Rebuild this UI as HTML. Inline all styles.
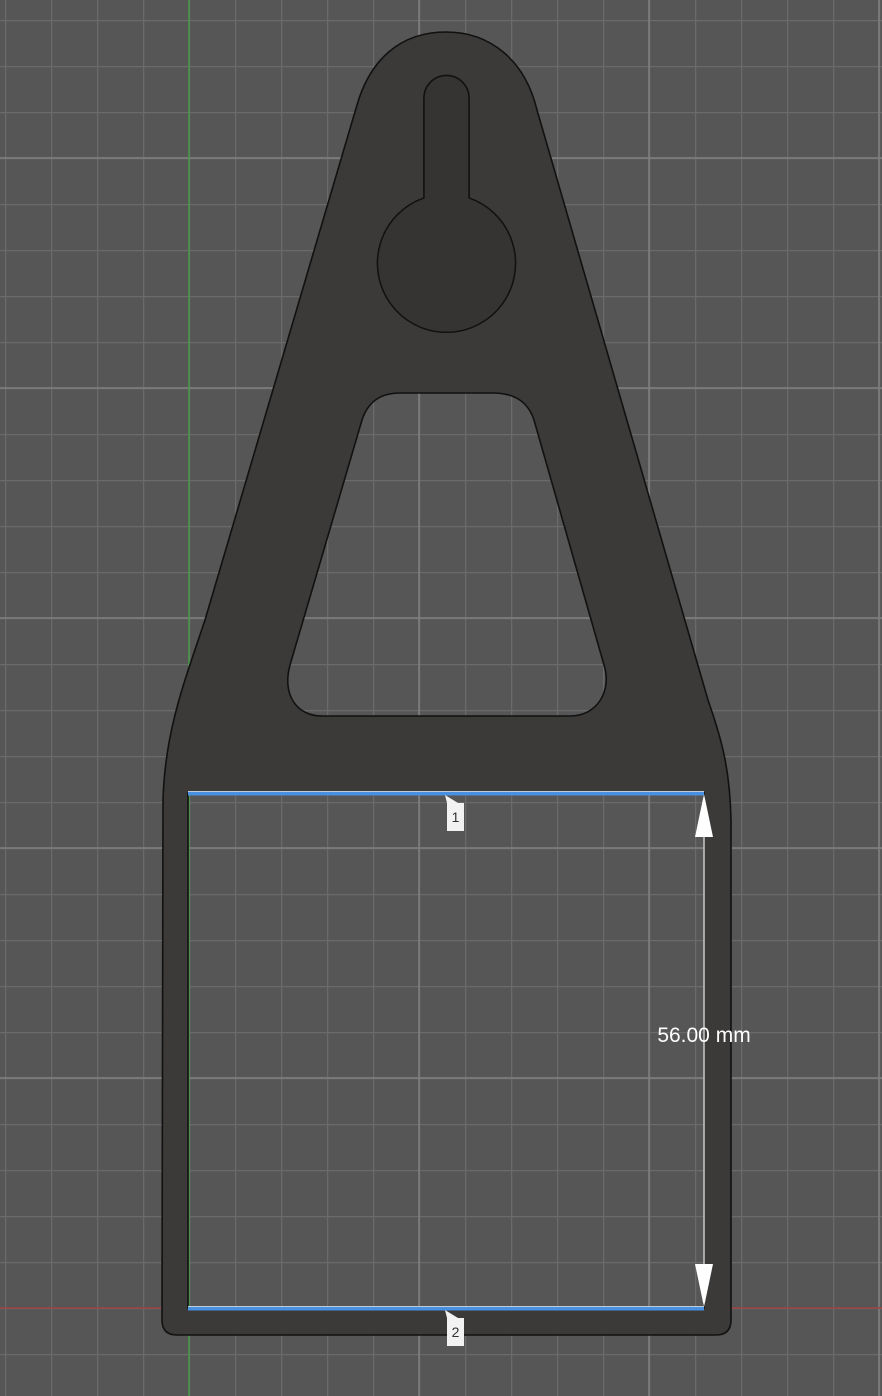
<!DOCTYPE html>
<html><head><style>
html,body{margin:0;padding:0;background:#565656;width:882px;height:1396px;overflow:hidden}
svg{display:block}
</style></head><body>
<svg width="882" height="1396" viewBox="0 0 882 1396" xmlns="http://www.w3.org/2000/svg">
<defs>
<pattern id="minor" width="46" height="46" patternUnits="userSpaceOnUse" x="5" y="20">
<path d="M0 0.5H46M0.5 0V46" stroke="#6a6a6a" stroke-width="1.5" fill="none"/>
</pattern>
</defs>
<rect width="882" height="1396" fill="#565656"/>
<rect width="882" height="1396" fill="url(#minor)"/>
<g stroke="#808080" stroke-width="1.5">
<line x1="419" y1="0" x2="419" y2="1396"/><line x1="649" y1="0" x2="649" y2="1396"/><line x1="879" y1="0" x2="879" y2="1396"/>
<line x1="0" y1="158" x2="882" y2="158"/><line x1="0" y1="388" x2="882" y2="388"/><line x1="0" y1="618" x2="882" y2="618"/>
<line x1="0" y1="848" x2="882" y2="848"/><line x1="0" y1="1078" x2="882" y2="1078"/>
</g>
<line x1="189" y1="0" x2="189" y2="1396" stroke="#4a9a4a" stroke-width="1.5"/>
<line x1="0" y1="1308" x2="882" y2="1308" stroke="#a04040" stroke-width="1.5"/>
<path fill-rule="evenodd" fill="#3b3a39" stroke="#111" stroke-width="1.6" d="
M446 32 C400 32 370 60 357 105 L205 620 C185 680 165 730 163 800 L162 1320 Q162 1335 177 1335 L716 1335 Q731 1335 731 1320 L731 820 C730 770 722 740 708 700 L537 110 C525 60 490 32 446 32 Z
M188 793 L704 793 L704 1308 L188 1308 Z
M424 98 A22.5 22.5 0 0 1 469 98 L469 198 A69 69 0 1 1 424 198 Z
M400 393 L492 393 C515 393 528 402 534 420 L604 665 C612 690 598 716 570 716 L322 716 C296 716 282 694 290 665 L362 420 C368 402 380 393 400 393 Z"/>
<path fill="#353433" stroke="#111" stroke-width="1.4" d="M424 98 A22.5 22.5 0 0 1 469 98 L469 198 A69 69 0 1 1 424 198 Z"/>
<g stroke="#4a90e0" stroke-width="4"><line x1="188" y1="793.5" x2="704" y2="793.5"/><line x1="188" y1="1308.5" x2="704" y2="1308.5"/></g>
<g stroke="#c0ccd8" stroke-width="1"><line x1="188" y1="791.5" x2="704" y2="791.5"/><line x1="188" y1="1306.5" x2="704" y2="1306.5"/></g>
<line x1="704" y1="820" x2="704" y2="1280" stroke="#fff" stroke-width="1.2"/>
<path d="M704 794 L695 837 L713 837 Z M704 1307 L695 1264 L713 1264 Z" fill="#fff"/>
<rect x="447" y="803" width="17" height="28" fill="#f2f2f2"/><path d="M445 795 L458 803 L447 803Z" fill="#f2f2f2"/>
<text x="455.5" y="822" font-family="Liberation Sans, sans-serif" font-size="14" fill="#333" text-anchor="middle">1</text>
<rect x="447" y="1318" width="17" height="28" fill="#f2f2f2"/><path d="M445 1310 L458 1318 L447 1318Z" fill="#f2f2f2"/>
<text x="455.5" y="1337" font-family="Liberation Sans, sans-serif" font-size="14" fill="#333" text-anchor="middle">2</text>
<text x="704" y="1042" font-family="Liberation Sans, sans-serif" font-size="21" fill="#fff" text-anchor="middle">56.00 mm</text>
</svg>
</body></html>
